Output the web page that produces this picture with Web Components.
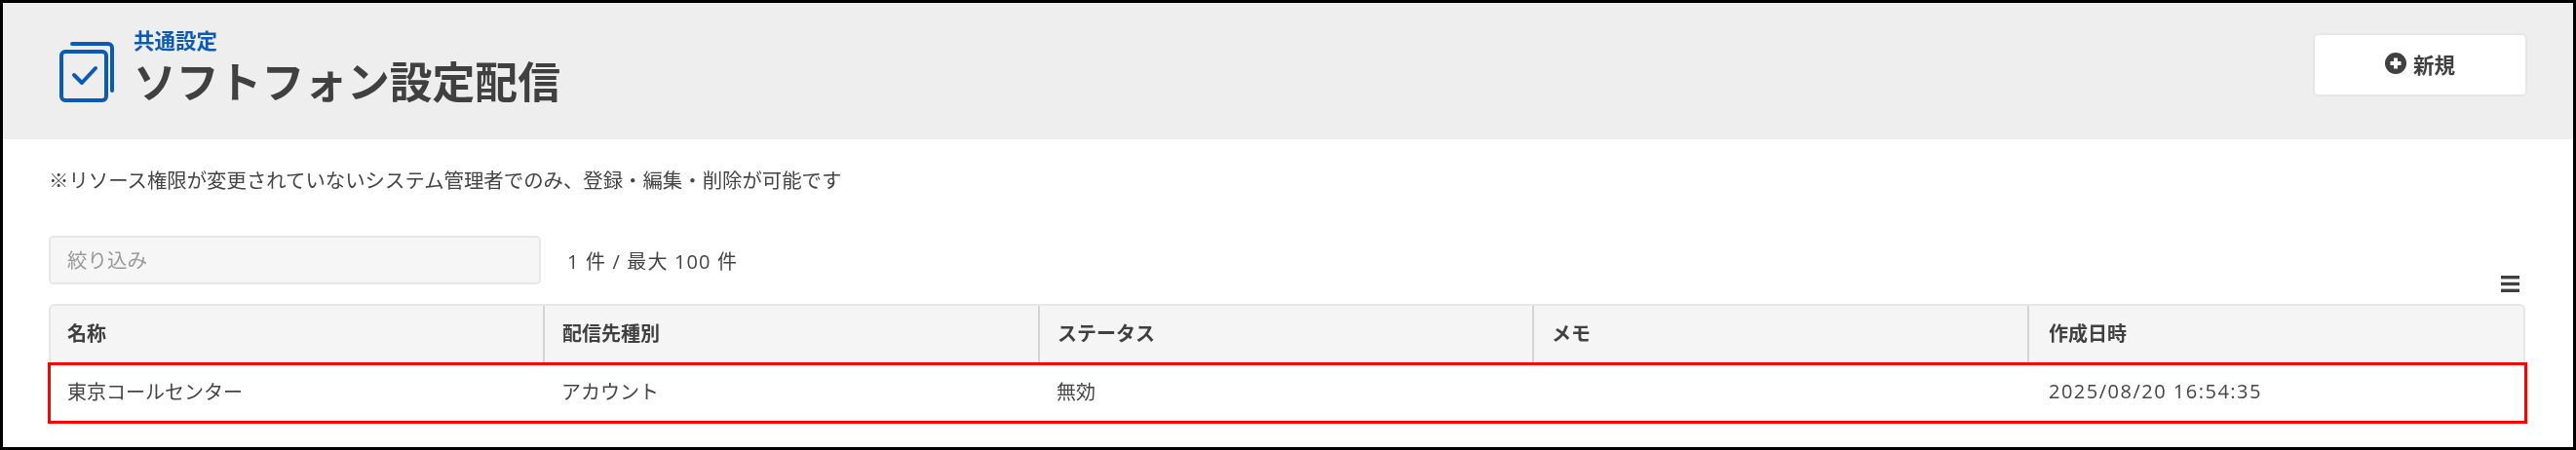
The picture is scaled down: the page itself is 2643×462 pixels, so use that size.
<!DOCTYPE html>
<html lang="ja">
<head>
<meta charset="utf-8">
<title>ソフトフォン設定配信</title>
<style>
	html, body {
		margin: 0;
		background: #fff;
	}

	body {
		font-family: "Open Sans", "Noto Sans CJK JP", sans-serif;
		font-size: 20px;
		color: #444;
	}
</style>
</head>
<body>
<softphone-page>
	<page-header section="共通設定" heading="ソフトフォン設定配信" action="新規"></page-header>
	<page-note>※リソース権限が変更されていないシステム管理者でのみ、登録・編集・削除が可能です</page-note>
	<filter-bar placeholder="絞り込み" count="1 件 / 最大 100 件"></filter-bar>
	<config-table></config-table>
</softphone-page>

<script>
class SoftphonePage extends HTMLElement {
	connectedCallback() {
		this.attachShadow({ mode: 'open' }).innerHTML = `
		<style>
			:host {
				display: block;
				box-sizing: border-box;
				width: 2643px;
				height: 462px;
				border: 3px solid #000;
				overflow: hidden;
				background: #fff;
				filter: blur(0.35px);
			}
		</style>
		<slot></slot>`;
	}
}

class PageHeader extends HTMLElement {
	connectedCallback() {
		this.attachShadow({ mode: 'open' }).innerHTML = `
		<style>
			:host {
				display: flex;
				align-items: center;
				box-sizing: border-box;
				height: 140px;
				padding: 0 47px 12px 58px;
				background: #eee;
			}

			.icon {
				width: 58px;
				height: 64px;
				margin: 13px 18px 0 0;
				flex: none;
			}

			.titles {
				flex: 1;
				margin-top: 7px;
			}

			.section {
				font-size: 21.5px;
				font-weight: 700;
				line-height: 26px;
				color: #0a5bb8;
			}

			h1 {
				margin: 0;
				font-size: 43.8px;
				line-height: 58px;
				font-weight: 700;
				color: #404040;
			}

			button {
				display: flex;
				align-items: center;
				justify-content: center;
				gap: 7px;
				box-sizing: border-box;
				width: 220px;
				height: 65px;
				margin-top: -1px;
				padding: 0 0 3px;
				border: 2px solid #e6e6e6;
				border-radius: 6px;
				background: #fff;
				font: inherit;
				font-size: 21.5px;
				font-weight: 700;
				color: #404040;
			}

			button svg {
				width: 22px;
				height: 22px;
			}
		</style>
		<svg class="icon" viewBox="0 0 58 64" fill="none" stroke="#0a5bb8" stroke-width="4">
			<rect x="2" y="11" width="46" height="50" rx="4"/>
			<path d="M13 3h37a4 4 0 0 1 4 4v44" stroke-linecap="round"/>
			<path d="M15 35l8 8 14-15" stroke-linecap="round" stroke-linejoin="round"/>
		</svg>
		<div class="titles">
			<div class="section">${this.getAttribute('section')}</div>
			<h1>${this.getAttribute('heading')}</h1>
		</div>
		<button>
			<svg viewBox="0 0 22 22">
				<circle cx="11" cy="11" r="11" fill="#404040"/>
				<path d="M11 5.5v11M5.5 11h11" stroke="#fff" stroke-width="4"/>
			</svg>
			${this.getAttribute('action')}
		</button>`;
	}
}

class PageNote extends HTMLElement {
	connectedCallback() {
		this.attachShadow({ mode: 'open' }).innerHTML = `
		<style>
			:host {
				display: block;
				padding: 25px 0 0 47px;
				height: 34px;
				line-height: 34px;
				font-size: 20.4px;
				color: #444;
			}
		</style>
		<slot></slot>`;
	}
}

class FilterBar extends HTMLElement {
	connectedCallback() {
		this.attachShadow({ mode: 'open' }).innerHTML = `
		<style>
			:host {
				display: flex;
				align-items: center;
				gap: 27px;
				margin: 40px 0 0 47px;
				height: 50px;
			}

			input {
				box-sizing: border-box;
				width: 505px;
				height: 50px;
				padding: 0 17px;
				border: 2px solid #e6e6e6;
				border-radius: 5px;
				background: #f6f6f6;
				font: inherit;
				font-size: 20.5px;
				outline: none;
			}

			input::placeholder {
				color: #999;
			}

			.count {
				font-size: 20px;
				letter-spacing: 1.15px;
				color: #444;
			}
		</style>
		<input placeholder="${this.getAttribute('placeholder')}">
		<span class="count">${this.getAttribute('count')}</span>`;
	}
}

class ConfigTable extends HTMLElement {
	connectedCallback() {
		const columns = ['名称', '配信先種別', 'ステータス', 'メモ', '作成日時'];
		const cells = ['東京コールセンター', 'アカウント', '無効', '', '2025/08/20 16:54:35'];

		this.attachShadow({ mode: 'open' }).innerHTML = `
		<style>
			:host {
				display: block;
				margin: 0 49px 0 47px;
			}

			.tools {
				display: flex;
				justify-content: flex-end;
				height: 20px;
				padding-right: 6px;
			}

			.tools svg {
				width: 19px;
				height: 17px;
				margin-top: -9px;
			}

			.row {
				display: grid;
			}

			.head {
				grid-template-columns: 505px 508px 507px 508px 1fr;
				box-sizing: border-box;
				height: 60px;
				border: 2px solid #e6e6e6;
				border-bottom: none;
				border-radius: 6px 6px 0 0;
				background: #f5f5f5;
				font-weight: 700;
				color: #404040;
			}

			.head div {
				display: flex;
				align-items: center;
				padding: 0 18px 3px;
				border-left: 2px solid #d4d4d4;
			}

			.head div:first-child {
				border-left: none;
				padding-left: 17px;
			}

			.head div:last-child {
				padding-left: 20px;
			}

			.body {
				grid-template-columns: 506px 508px 507px 508px 1fr;
				box-sizing: border-box;
				height: 63px;
				margin: 0 -2px 0 -1px;
				border: 3px solid #f00;
			}

			.body div {
				display: flex;
				align-items: center;
				padding: 0 18px 4px;
				color: #444;
			}

			.body div:first-child {
				padding-left: 17px;
			}

			.body .date {
				padding-left: 21px;
				letter-spacing: 1.5px;
			}
		</style>
		<div class="tools">
			<svg viewBox="0 0 19 17" fill="#404040">
				<rect width="19" height="3.4"/>
				<rect y="6.8" width="19" height="3.4"/>
				<rect y="13.6" width="19" height="3.4"/>
			</svg>
		</div>
		<div class="row head">${columns.map(c => `<div>${c}</div>`).join('')}</div>
		<div class="row body">${cells.map((c, i) => `<div class="${i == 4 ? 'date' : ''}">${c}</div>`).join('')}</div>`;
	}
}

customElements.define('softphone-page', SoftphonePage);
customElements.define('page-header', PageHeader);
customElements.define('page-note', PageNote);
customElements.define('filter-bar', FilterBar);
customElements.define('config-table', ConfigTable);
</script>
</body>
</html>
